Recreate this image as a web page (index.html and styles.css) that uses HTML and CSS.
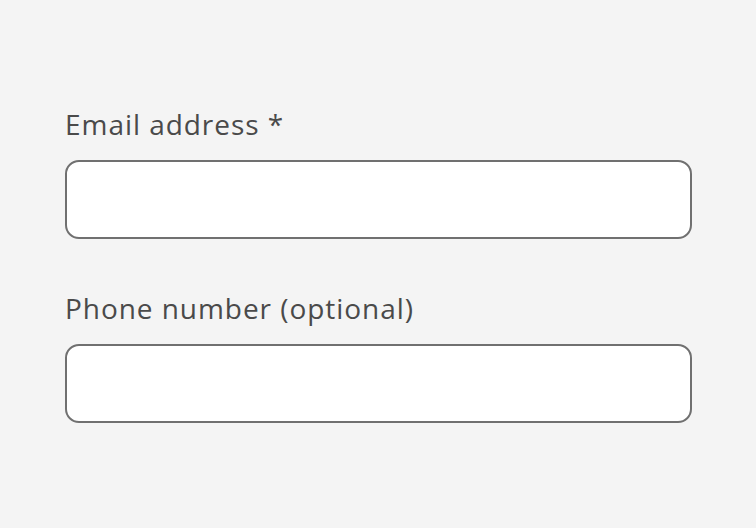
FILE: index.html
```html
<!DOCTYPE html>
<html>
<head>
<meta charset="utf-8">
<link rel="stylesheet" href="styles.css">
</head>
<body>
<form class="form">
  <div class="field">
    <label class="label" for="email">Email address *</label>
    <input class="input" id="email" type="email">
  </div>
  <div class="field">
    <label class="label" for="phone">Phone number (optional)</label>
    <input class="input" id="phone" type="tel">
  </div>
</form>
</body>
</html>
```
FILE: styles.css
```css
html, body {
  margin: 0;
  padding: 0;
  background: #f4f4f4;
}
body {
  font-family: "Open Sans", "Noto Sans", sans-serif;
  color: #4a4a4a;
}
.form {
  display: flex;
  flex-direction: column;
  gap: 49px;
  padding: 104px 65px 0 65px;
}
.field {
  display: flex;
  flex-direction: column;
  gap: 16px;
}
.label {
  font-size: 28px;
  line-height: 40px;
  letter-spacing: 0.95px;
}
.input {
  box-sizing: border-box;
  width: 627px;
  height: 79px;
  border: 2px solid #707070;
  border-radius: 14px;
  background: #ffffff;
  margin: 0;
  outline: none;
}
```
